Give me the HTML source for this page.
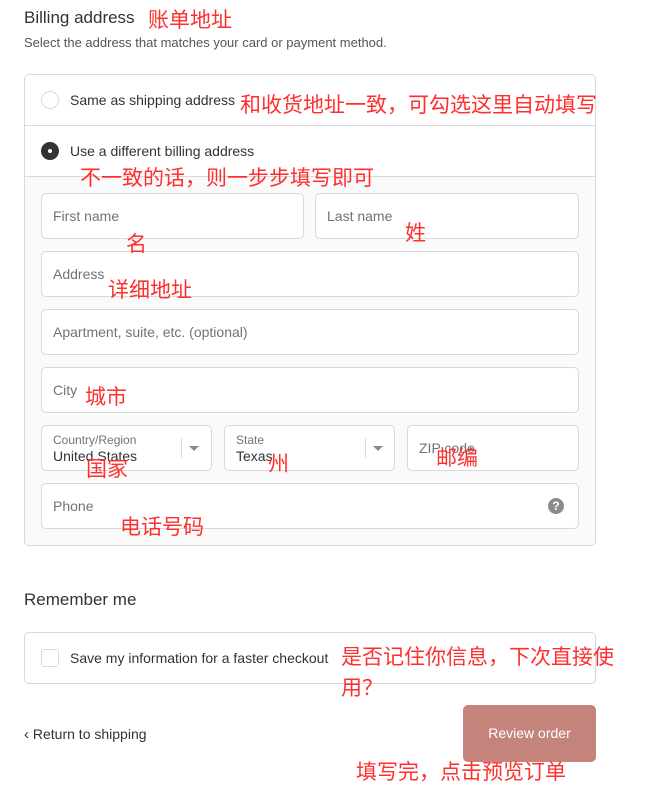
<!DOCTYPE html>
<html><head><meta charset="utf-8"><style>
*{margin:0;padding:0;box-sizing:border-box}
body{width:661px;height:791px;background:#fff;position:relative;overflow:hidden;font-family:"Liberation Sans",Arial,sans-serif;color:#333}
.a{position:absolute;white-space:nowrap}
.r{position:absolute;white-space:nowrap;color:#ff2f2f;font-family:"Noto Sans CJK SC","WenQuanYi Zen Hei",sans-serif;font-size:21px;line-height:24px}
.f{position:absolute;background:#fff;border:1px solid #d9d9d9;border-radius:5px;height:46px}
.p{position:absolute;font-size:14px;color:#737373;line-height:16px}
</style></head><body>
<div class="a" style="left:24px;top:8px;font-size:17px;color:#333">Billing address</div>
<div class="a" style="left:24px;top:35px;font-size:13px;color:#555">Select the address that matches your card or payment method.</div>

<div style="position:absolute;left:24px;top:74px;width:572px;height:472px;border:1px solid #d9d9d9;border-radius:5px;background:#fafafa;overflow:hidden">
  <div style="position:absolute;left:0;top:0;width:100%;height:102px;background:#fff"></div>
  <div style="position:absolute;left:0;top:50px;width:100%;height:1px;background:#d9d9d9"></div>
  <div style="position:absolute;left:0;top:101px;width:100%;height:1px;background:#d9d9d9"></div>
  <div style="position:absolute;left:16px;top:16px;width:18px;height:18px;border:1px solid #d9d9d9;border-radius:50%;background:#fff"></div>
  <div style="position:absolute;left:16px;top:67px;width:18px;height:18px;border-radius:50%;background:#333"></div>
  <div style="position:absolute;left:23px;top:74px;width:4px;height:4px;border-radius:50%;background:#fff"></div>
</div>
<div class="a" style="left:70px;top:92px;font-size:14px;color:#333">Same as shipping address</div>
<div class="a" style="left:70px;top:143px;font-size:14px;color:#333">Use a different billing address</div>

<div class="f" style="left:41px;top:193px;width:263px"></div>
<div class="f" style="left:315px;top:193px;width:264px"></div>
<div class="f" style="left:41px;top:251px;width:538px"></div>
<div class="f" style="left:41px;top:309px;width:538px"></div>
<div class="f" style="left:41px;top:367px;width:538px"></div>
<div class="f" style="left:41px;top:425px;width:171px"></div>
<div class="f" style="left:224px;top:425px;width:171px"></div>
<div class="f" style="left:407px;top:425px;width:172px"></div>
<div class="f" style="left:41px;top:483px;width:538px"></div>

<div class="p" style="left:53px;top:208px">First name</div>
<div class="p" style="left:327px;top:208px">Last name</div>
<div class="p" style="left:53px;top:266px">Address</div>
<div class="p" style="left:53px;top:324px">Apartment, suite, etc. (optional)</div>
<div class="p" style="left:53px;top:382px">City</div>
<div class="p" style="left:53px;top:432px;font-size:12px">Country/Region</div>
<div class="a" style="left:53px;top:448px;font-size:14px;color:#333">United States</div>
<div style="position:absolute;left:181px;top:438px;width:1px;height:20px;background:#d9d9d9"></div>
<div style="position:absolute;left:189px;top:446px;border-left:5px solid transparent;border-right:5px solid transparent;border-top:5px solid #888"></div>
<div class="p" style="left:236px;top:432px;font-size:12px">State</div>
<div class="a" style="left:236px;top:448px;font-size:14px;color:#333">Texas</div>
<div style="position:absolute;left:365px;top:438px;width:1px;height:20px;background:#d9d9d9"></div>
<div style="position:absolute;left:373px;top:446px;border-left:5px solid transparent;border-right:5px solid transparent;border-top:5px solid #888"></div>
<div class="p" style="left:419px;top:440px">ZIP code</div>
<div class="p" style="left:53px;top:498px">Phone</div>
<div style="position:absolute;left:548px;top:498px;width:16px;height:16px;border-radius:50%;background:#8c8c8c;color:#fff;font-size:12px;font-weight:bold;line-height:16px;text-align:center">?</div>

<div class="a" style="left:24px;top:590px;font-size:17px;color:#333">Remember me</div>
<div style="position:absolute;left:24px;top:632px;width:572px;height:52px;border:1px solid #d9d9d9;border-radius:5px"></div>
<div style="position:absolute;left:41px;top:649px;width:18px;height:18px;border:1px solid #d9d9d9;border-radius:3px"></div>
<div class="a" style="left:70px;top:650px;font-size:14px;color:#333">Save my information for a faster checkout</div>

<div class="a" style="left:24px;top:726px;font-size:14px;color:#333"><span style="font-size:15px">‹</span> Return to shipping</div>
<div style="position:absolute;left:463px;top:705px;width:133px;height:57px;border-radius:5px;background:#c4847c;color:#fff;font-size:14px;line-height:57px;text-align:center">Review order</div>

<div class="r" style="left:148px;top:7px">账单地址</div>
<div class="r" style="left:240px;top:92px">和收货地址一致，可勾选这里自动填写</div>
<div class="r" style="left:80px;top:165px">不一致的话，则一步步填写即可</div>
<div class="r" style="left:126px;top:231px">名</div>
<div class="r" style="left:405px;top:220px">姓</div>
<div class="r" style="left:108px;top:277px">详细地址</div>
<div class="r" style="left:85px;top:384px">城市</div>
<div class="r" style="left:86px;top:456px">国家</div>
<div class="r" style="left:268px;top:451px">州</div>
<div class="r" style="left:436px;top:445px">邮编</div>
<div class="r" style="left:120px;top:514px">电话号码</div>
<div class="r" style="left:341px;top:644px">是否记住你信息，下次直接使</div>
<div class="r" style="left:341px;top:675px">用？</div>
<div class="r" style="left:356px;top:759px">填写完，点击预览订单</div>
</body></html>
